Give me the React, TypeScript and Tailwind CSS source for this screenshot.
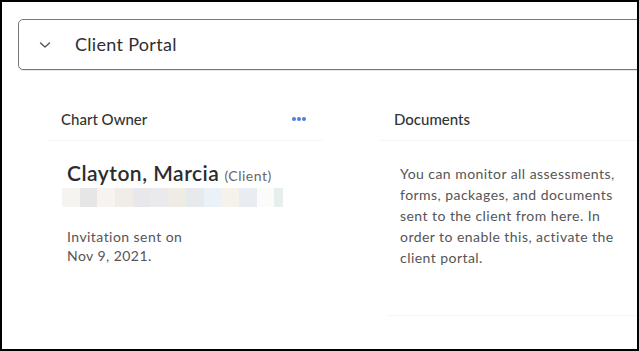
import React from "react";

const blurBlocks = [
  "#f5f4f1",
  "#e6e6e6",
  "#f7f4f0",
  "#f0ede8",
  "#e8e7ea",
  "#eaeaee",
  "#efebe5",
  "#e7eaec",
  "#eaf1f8",
  "#f5f2ec",
  "#e9ecf0",
  "#fbfbf9",
  "#e7eeee",
];

function Chevron() {
  return (
    <svg width="12" height="8" viewBox="0 0 12 8" fill="none">
      <path d="M1.5 2 L6 6 L10.5 2" stroke="#555" strokeWidth="1.4" strokeLinecap="round" strokeLinejoin="round" />
    </svg>
  );
}

function Dots() {
  return (
    <div className="flex items-center gap-[1px]">
      <span className="w-[4px] h-[4px] rounded-full bg-[#4b7fe0]" />
      <span className="w-[4px] h-[4px] rounded-full bg-[#4b7fe0]" />
      <span className="w-[4px] h-[4px] rounded-full bg-[#4b7fe0]" />
    </div>
  );
}

export default function App() {
  return (
    <div className="w-[639px] h-[351px] bg-white border-2 border-black overflow-hidden font-['Lato',sans-serif] text-[#333]">
      <div className="ml-[16px] mt-[17px] w-[640px] h-[51px] border border-[#777] rounded-l-[5px] flex items-center shadow-[0_1px_0_#e8e8e8]">
        <div className="w-[56px] pl-[20px] flex items-center">
          <Chevron />
        </div>
        <span className="pb-[2px] text-[18px] leading-[22px] tracking-[0.3px] text-[#2f2f2f]">Client Portal</span>
      </div>

      <div className="flex mt-[39px]">
        <div className="ml-[45px] w-[276px]">
          <div className="flex items-center justify-between h-[32px] pl-[14px] pr-[17px] pb-[11px] border-b border-[#f4f5f5]">
            <span className="text-[15px] leading-[20px] font-medium">Chart Owner</span>
            <Dots />
          </div>
          <div className="pt-[20px]">
            <div className="pl-[20px] flex items-baseline gap-[5px]">
              <span className="text-[21px] leading-[24px] font-semibold tracking-[0.5px] text-[#2c2c2c]">Clayton, Marcia</span>
              <span className="text-[14px] tracking-[0.5px] text-[#666]">(Client)</span>
            </div>
            <div className="ml-[15px] mt-[2px] flex h-[19px]">
              {blurBlocks.map((c, i) => (
                <div
                  key={i}
                  className={i === blurBlocks.length - 1 ? "w-[9px] h-full" : "w-[17.7px] h-full"}
                  style={{ backgroundColor: c }}
                />
              ))}
            </div>
            <p className="pl-[20px] mt-[20px] text-[14px] leading-[19px] tracking-[0.45px] text-[#555]">
              Invitation sent on
              <br />
              Nov 9, 2021.
            </p>
          </div>
        </div>

        <div className="ml-[57px] flex-1">
          <div className="h-[32px] pl-[14px] pb-[11px] border-b border-[#f4f5f5] text-[15px] leading-[20px] font-medium">
            Documents
          </div>
          <p className="pl-[20px] pt-[22px] w-[242px] text-[14px] leading-[21px] tracking-[0.45px] text-[#555]">
            You can monitor all assessments, forms, packages, and documents sent to the client from here. In order to enable this, activate the client portal.
          </p>
          <div className="mt-[47px] ml-[7px] border-b border-[#f4f8f8]" />
        </div>
      </div>
    </div>
  );
}
